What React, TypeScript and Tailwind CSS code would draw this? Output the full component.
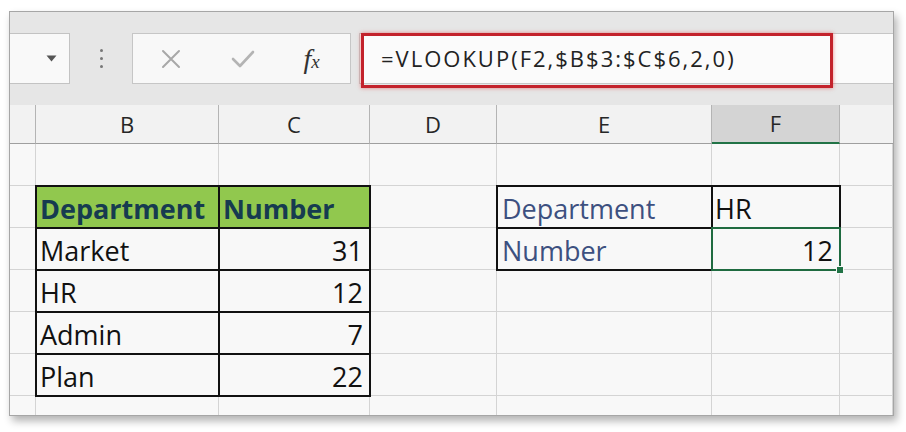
import type { ReactNode } from 'react'

type CellProps = {
  children?: ReactNode
  className?: string
  bg?: string
}

function Cell({ children, className = '', bg = 'bg-[#f8f8f8]' }: CellProps) {
  return (
    <div className={`relative flex items-end border-r border-b border-[#d4d4d4] pb-[5px] leading-none ${bg} ${className}`}>
      {children}
    </div>
  )
}

function ColHead({ children, className = '', bg = 'bg-[#f2f2f2]' }: CellProps) {
  return (
    <div className={`flex items-center justify-center border-r border-b border-r-[#b4b4b4] text-[22px] text-[#262626] ${bg} ${className}`}>
      {children}
    </div>
  )
}

const tableHead = 'font-bold text-[#163b50] outline-2 outline-[#111] -outline-offset-1 z-[1]'
const tableCell = 'outline-2 outline-[#111] -outline-offset-1 z-[1]'

const rows = [
  { b: 'Market', c: '31' },
  { b: 'HR', c: '12' },
  { b: 'Admin', c: '7' },
  { b: 'Plan', c: '22' },
]

export default function App() {
  return (
    <div className="h-[432px] w-[906px] bg-white pt-[11px] pl-[9px] font-['Open_Sans',sans-serif]">
      <div className="flex h-[405px] w-[885px] flex-col overflow-hidden border border-[#a6a6a6] bg-[#e6e6e6] shadow-[3px_5px_8px_rgba(0,0,0,0.3)]">
        {/* formula bar */}
        <div className="relative h-[93px] shrink-0 pt-[21px]">
          <div className="flex h-[51px] items-stretch">
            <div className="flex w-[60px] items-center justify-end border-y border-r border-[#c3c3c3] bg-[#f9f9f9] pr-[12px]">
              <svg width="11" height="7" viewBox="0 0 11 7">
                <path d="M0.5 0.5 L10.5 0.5 L5.5 6.5 Z" fill="#555" />
              </svg>
            </div>
            <div className="flex w-[62px] flex-col items-center justify-center gap-[5px]">
              <span className="h-[3px] w-[3px] rounded-full bg-[#777]" />
              <span className="h-[3px] w-[3px] rounded-full bg-[#777]" />
              <span className="h-[3px] w-[3px] rounded-full bg-[#777]" />
            </div>
            <div className="flex w-[219px] items-center border border-[#c6c6c6] bg-[#f8f8f8]">
              <div className="flex w-[76px] justify-center">
                <svg width="20" height="20" viewBox="0 0 20 20">
                  <path d="M2 2 L18 18 M18 2 L2 18" stroke="#a8a8a8" strokeWidth="2" strokeLinecap="round" />
                </svg>
              </div>
              <div className="flex w-[68px] justify-center">
                <svg width="24" height="18" viewBox="0 0 24 18">
                  <path d="M2 9 L9 16 L22 2" stroke="#b4b4b4" strokeWidth="2.6" fill="none" strokeLinecap="round" strokeLinejoin="round" />
                </svg>
              </div>
              <div className="flex flex-1 items-end justify-center pr-[4px] font-['Liberation_Serif',serif] italic text-[#333]">
                <span className="text-[28px] leading-none">f</span>
                <span className="mb-[2px] text-[19px] leading-none">x</span>
              </div>
            </div>
            <div className="ml-[8px] flex flex-1 items-center border-y border-l border-[#c6c6c6] bg-[#fbfbfb] pl-[21px] text-[22px] tracking-[2px] text-[#222]">
              =VLOOKUP(F2,$B$3:$C$6,2,0)
            </div>
          </div>
          <div className="absolute top-[21px] left-[351px] h-[55px] w-[472px] border-[3px] border-[#c3222b] shadow-[0_0_4px_rgba(220,40,40,0.55)]" />
        </div>

        {/* sheet */}
        <div className="grid grid-cols-[26px_183px_151px_127px_215px_128px_1fr] grid-rows-[39px_42px_42px_42px_42px_42px_42px_42px] text-[27px] text-[#111]">
          <ColHead className="border-b border-b-[#9f9f9f]" />
          <ColHead className="border-b border-b-[#9f9f9f]">B</ColHead>
          <ColHead className="border-b border-b-[#9f9f9f]">C</ColHead>
          <ColHead className="border-b border-b-[#9f9f9f]">D</ColHead>
          <ColHead className="border-b border-b-[#9f9f9f]">E</ColHead>
          <ColHead className="border-b-2 border-b-[#217346]" bg="bg-[#d4d4d4]">F</ColHead>
          <div className="border-b border-b-[#9f9f9f] bg-[#f2f2f2]" />

          {/* row 1 */}
          <Cell />
          <Cell />
          <Cell />
          <Cell />
          <Cell />
          <Cell />
          <Cell />

          {/* row 2 */}
          <Cell />
          <Cell bg="bg-[#91c84e]" className={`pl-[4px] ${tableHead}`}>Department</Cell>
          <Cell bg="bg-[#91c84e]" className={`pl-[4px] ${tableHead}`}>Number</Cell>
          <Cell />
          <Cell className={`pl-[5px] text-[#3d5080] ${tableCell}`}>Department</Cell>
          <Cell className={`pl-[3px] ${tableCell}`}>HR</Cell>
          <Cell />

          {rows.map((r, i) => (
            <div key={r.b} className="contents">
              <Cell />
              <Cell className={`pl-[4px] ${tableCell}`}>{r.b}</Cell>
              <Cell className={`justify-end pr-[6px] ${tableCell}`}>{r.c}</Cell>
              <Cell />
              {i === 0 ? (
                <>
                  <Cell className={`pl-[5px] text-[#3d5080] ${tableCell}`}>Number</Cell>
                  <Cell className="z-[2] justify-end pr-[6px]">
                    12
                    <span className="absolute -top-[1px] -left-[1px] -right-[2px] -bottom-[2px] border-[2.5px] border-[#1f6b40]" />
                    <span className="absolute -right-[5px] -bottom-[5px] h-[8px] w-[8px] border border-[#f8f8f8] bg-[#217346]" />
                  </Cell>
                </>
              ) : (
                <>
                  <Cell />
                  <Cell />
                </>
              )}
              <Cell />
            </div>
          ))}

          {/* row 7 */}
          <Cell />
          <Cell />
          <Cell />
          <Cell />
          <Cell />
          <Cell />
          <Cell />
        </div>
      </div>
    </div>
  )
}
